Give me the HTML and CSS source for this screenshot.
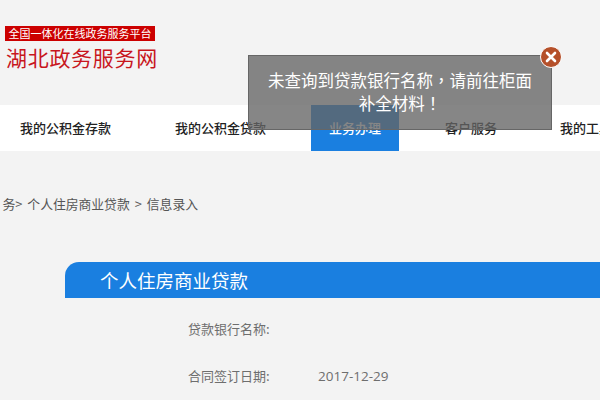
FILE: index.html
```html
<!DOCTYPE html>
<html lang="zh-CN">
<head>
  <meta charset="UTF-8">
  <meta name="viewport" content="width=device-width, initial-scale=1.0">
  <title>个人住房商业贷款</title>
  <link rel="stylesheet" href="styles.css">
</head>
<body>
  <header class="header">
    <div class="logo">
      <div class="logo-tag">全国一体化在线政务服务平台</div>
      <div class="logo-name">湖北政务服务网</div>
    </div>
  </header>

  <nav class="nav">
    <a class="nav-item nav-first">我的公积金存款</a>
    <a class="nav-item nav-second">我的公积金贷款</a>
    <a class="nav-item nav-active">业务办理</a>
    <a class="nav-item nav-fourth">客户服务</a>
    <a class="nav-item nav-fifth">我的工具</a>
  </nav>

  <div class="crumbs">
    <span>务&gt;</span>
    <span>个人住房商业贷款</span>
    <span>&gt;</span>
    <span>信息录入</span>
  </div>

  <section class="panel">
    <h2 class="panel-title">个人住房商业贷款</h2>
    <div class="row">
      <label class="row-label">贷款银行名称:</label>
      <span class="row-value"></span>
    </div>
    <div class="row">
      <label class="row-label">合同签订日期:</label>
      <span class="row-value">2017-12-29</span>
    </div>
  </section>

  <div class="toast">
    <p class="toast-text">未查询到贷款银行名称<span class="punct" lang="zh-TW">，</span>请前往柜面补全材料<span class="punct" lang="zh-TW">！</span></p>
    <button class="toast-close" type="button">
      <svg width="12" height="12" viewBox="0 0 12 12">
        <path d="M2 2L10 10M10 2L2 10" stroke="#fff" stroke-width="2.6" stroke-linecap="round"/>
      </svg>
    </button>
  </div>
</body>
</html>
```

FILE: styles.css
```css
html, body {
  height: 100%;
}
body {
  font-family: "Noto Sans CJK SC", "Open Sans", sans-serif;
  margin: 0;
  padding: 0;
  background-color: #f3f3f3;
  overflow: hidden;
  position: relative;
}
.header {
  height: 105px;
  padding: 26px 0 0 5px;
  box-sizing: border-box;
}
.logo {
  width: 155px;
}
.logo-tag {
  width: 150px;
  height: 15px;
  background: #cc0000;
  color: #fff;
  font-size: 11px;
  line-height: 15px;
  text-align: center;
  white-space: nowrap;
}
.logo-name {
  margin: 2px 0 0 1px;
  color: #c8161d;
  font-size: 21px;
  line-height: 28px;
  letter-spacing: 0.7px;
  white-space: nowrap;
}
.nav {
  display: flex;
  height: 46px;
  background: #fff;
  white-space: nowrap;
}
.nav-item {
  flex-shrink: 0;
  font-size: 13px;
  line-height: 46px;
  font-weight: 500;
  color: #222;
  text-align: center;
}
.nav-first {
  margin-left: 20px;
}
.nav-second {
  margin-left: 64px;
}
.nav-active {
  margin-left: 45px;
  width: 88px;
  background: #1a7fe0;
  color: #fff;
}
.nav-fourth {
  margin-left: 46px;
}
.nav-fifth {
  margin-left: 63px;
}
.crumbs {
  display: flex;
  justify-content: flex-end;
  gap: 5px;
  width: 198px;
  margin-top: 44px;
  font-size: 12.8px;
  line-height: 18px;
  color: #555;
  white-space: nowrap;
}
.panel {
  margin: 49px 0 0 65px;
}
.panel-title {
  margin: 0;
  height: 36px;
  padding-left: 35px;
  background: #1a7fe0;
  border-radius: 14px 0 0 0;
  color: #fff;
  font-size: 18.5px;
  font-weight: 400;
  line-height: 36px;
}
.row {
  display: flex;
  margin: 22px 0 0 123px;
  height: 18px;
  font-size: 13px;
  line-height: 18px;
  color: #6e6e6e;
  white-space: nowrap;
}
.row + .row {
  margin-top: 29px;
}
.row-label {
  width: 130px;
}
.row-value {
  font-family: "Open Sans", sans-serif;
  font-size: 13.5px;
}
.toast {
  position: absolute;
  left: 248px;
  top: 55px;
  width: 304px;
  height: 75px;
  box-sizing: border-box;
  padding: 13px 16px 0;
  background: rgba(100, 100, 100, 0.78);
  border: 1px solid #666;
}
.toast-text {
  margin: 0;
  color: #fff;
  font-size: 16.5px;
  line-height: 23px;
  text-align: center;
}
.punct {
  font-family: "Noto Sans CJK TC", sans-serif;
}
.toast-close {
  position: absolute;
  right: -11px;
  top: -10px;
  width: 22px;
  height: 22px;
  padding: 0;
  border: 1px solid #fff;
  border-radius: 50%;
  background: #b5502a;
  display: flex;
  align-items: center;
  justify-content: center;
}
```
